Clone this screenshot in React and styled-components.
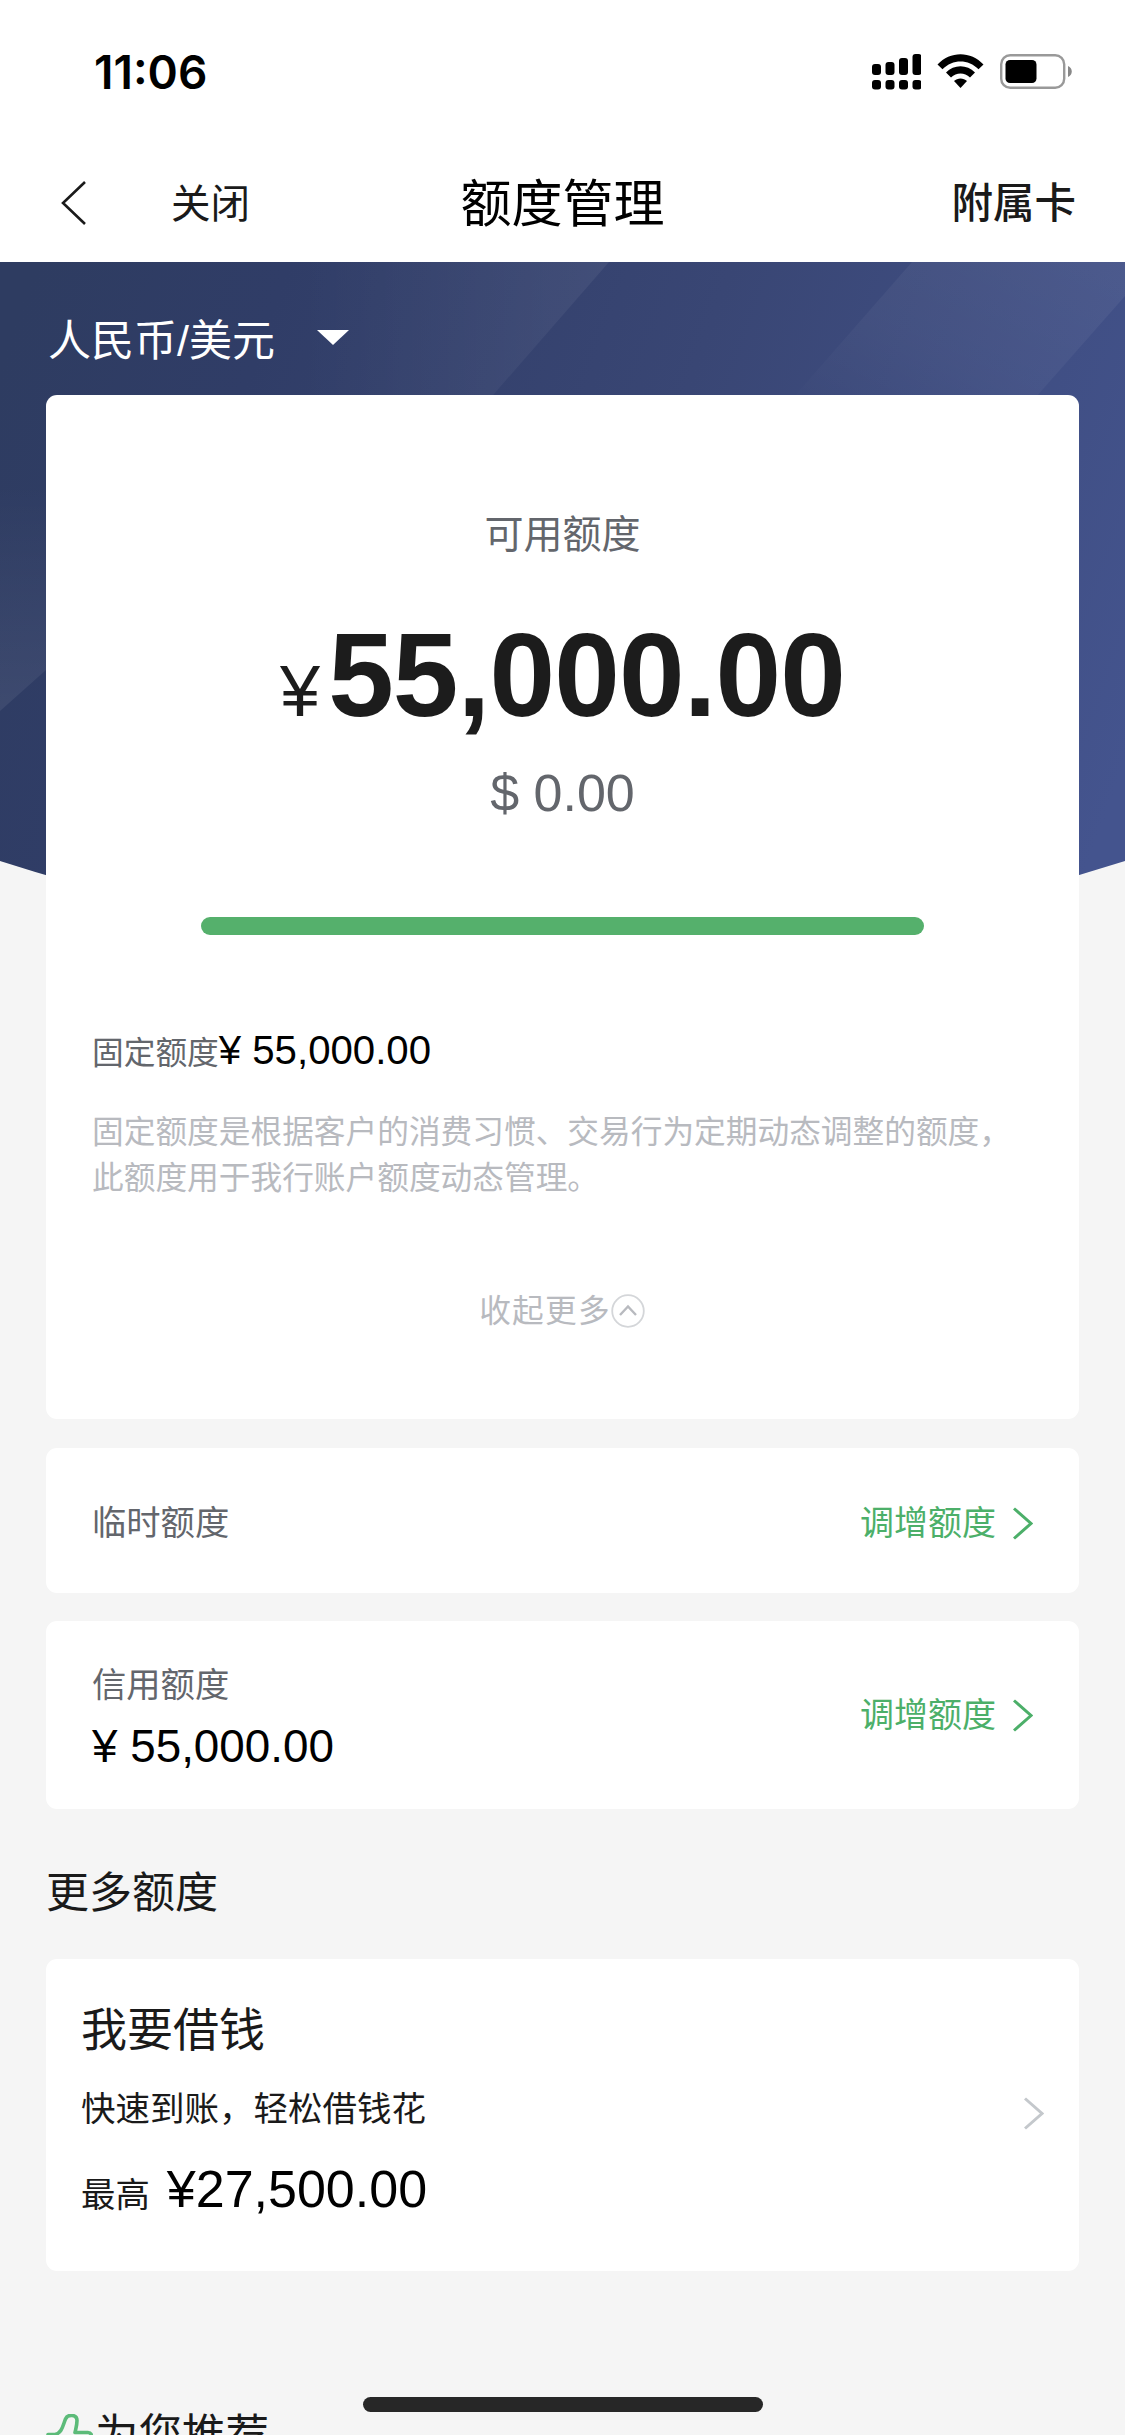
import React from "react";
import styled, { createGlobalStyle } from "styled-components";

const GlobalStyle = createGlobalStyle`
  * {
    box-sizing: border-box;
  }
  body {
    margin: 0;
    background: #f5f5f5;
    font-family: "Liberation Sans", "Noto Sans CJK SC", sans-serif;
    color: #1a1a1a;
  }
`;

const Page = styled.div`
  position: relative;
  width: 1125px;
  height: 2435px;
  overflow: hidden;
  background: #f5f5f5;
`;

const StatusBar = styled.div`
  display: flex;
  align-items: center;
  justify-content: space-between;
  height: 143px;
  padding: 0 53px 0 94px;
  background: white;
`;

const Time = styled.div`
  font-family: Inter, sans-serif;
  font-size: 46px;
  font-weight: 600;
  color: black;
`;

const StatusIcons = styled.div`
  display: flex;
  align-items: center;
  gap: 16px;
`;

const NavBar = styled.header`
  display: grid;
  grid-template-columns: 1fr auto 1fr;
  align-items: center;
  height: 119px;
  padding: 0 49px 5px;
  background: white;
`;

const NavLeft = styled.div`
  display: flex;
  align-items: center;
  gap: 84px;
  padding-left: 10px;
  font-size: 39.5px;

  svg {
    margin-top: 5px;
  }
`;

const Title = styled.h1`
  margin: 0;
  font-size: 51px;
  font-weight: 400;
  color: black;
`;

const NavRight = styled.div`
  justify-self: end;
  font-size: 41.5px;
  font-weight: 500;
`;

const BannerArt = styled.svg`
  position: absolute;
  top: 262px;
  left: 0;
  display: block;
`;

const Content = styled.main`
  position: relative;
  padding: 0 46px;
`;

const Currency = styled.div`
  display: flex;
  align-items: center;
  gap: 42px;
  height: 133px;
  padding: 17px 0 0 2px;
  font-size: 43px;
  color: white;
`;

const Card = styled.section`
  display: flex;
  align-items: center;
  justify-content: space-between;
  height: ${(props) => props.$height}px;
  margin-bottom: 28px;
  padding: 0 46px;
  border-radius: 11px;
  background: white;
`;

const LimitCard = styled(Card)`
  flex-direction: column;
  align-items: stretch;
  justify-content: flex-start;
  padding-top: 110px;
  margin-bottom: 29px;
`;

const Available = styled.div`
  text-align: center;
  font-size: 39px;
  line-height: 60px;
  color: #63666c;
`;

const Amount = styled.div`
  display: flex;
  align-items: baseline;
  justify-content: center;
  margin-top: 45px;
  height: 130px;
  line-height: 130px;
  font-size: 118px;
  font-weight: 700;
  letter-spacing: -0.9px;
  color: #1c1c1c;
`;

const Yen = styled.span`
  margin-right: 9px;
  font-size: 72px;
  font-weight: 400;
`;

const Dollar = styled.div`
  margin-top: 23px;
  text-align: center;
  font-size: 52px;
  line-height: 60px;
  color: #63666c;
`;

const Progress = styled.div`
  height: 18px;
  margin: 94px 109px 0;
  border-radius: 9px;
  background: #55b06c;
`;

const Fixed = styled.div`
  display: flex;
  align-items: baseline;
  height: 60px;
  margin-top: 86px;
  line-height: 60px;
  font-size: 31.7px;
  color: #63666c;
`;

const Price = styled.span`
  font-size: ${(props) => props.$size}px;
  color: black;
`;

const Note = styled.p`
  margin: 28px 0 0;
  font-size: 31.7px;
  line-height: 46px;
  white-space: nowrap;
  color: #b8babf;
`;

const Collapse = styled.div`
  display: flex;
  align-items: center;
  justify-content: center;
  margin-top: 87px;
  padding-right: 1px;
  font-size: 31.7px;
  line-height: 46px;
  letter-spacing: 1.2px;
  color: #b8babf;
`;

const Label = styled.div`
  font-size: 34.3px;
  line-height: 50px;
  color: #63666c;
`;

const Stack = styled.div`
  display: flex;
  flex-direction: column;
  gap: 11px;
  padding-top: 2px;
`;

const Raise = styled.div`
  display: flex;
  align-items: center;
  gap: 16px;
  font-size: 34px;
  line-height: 50px;
  color: #4caf69;
`;

// 没有金额的卡片，文字略微靠下
const TempCard = styled(Card)`
  padding-top: 5px;
`;

const SectionTitle = styled.h2`
  margin: 52px 0 34px;
  font-size: 43px;
  font-weight: 400;
  line-height: 64px;
`;

const LoanCard = styled(Card)`
  padding: 0 35px 3px;
  margin-bottom: 132px;
`;

const LoanTitle = styled.div`
  font-size: 46px;
  line-height: 60px;
`;

const LoanText = styled.div`
  margin-top: 24px;
  font-size: 34.5px;
  line-height: 50px;
`;

const LoanMax = styled.div`
  display: flex;
  align-items: baseline;
  gap: 17px;
  margin-top: 23px;
  font-size: 34.4px;
  line-height: 64px;
`;

const Recommend = styled.div`
  display: flex;
  align-items: flex-start;
  gap: 2px;
  font-size: 43.5px;
  line-height: 64px;

  svg {
    margin-top: 11px;
  }
`;

const HomeIndicator = styled.div`
  position: absolute;
  left: 363px;
  bottom: 23px;
  width: 400px;
  height: 15px;
  border-radius: 8px;
  background: #272727;
`;

const bars = [
  { x: 0, y: 10, height: 11 },
  { x: 13.5, y: 8, height: 13 },
  { x: 27, y: 4, height: 17 },
  { x: 40.5, y: 0, height: 21 },
];

const Signal = () => (
  <svg width="49" height="36" viewBox="0 0 49 36">
    {bars.map((bar) => (
      <g key={bar.x}>
        <rect x={bar.x} y={bar.y} width="9" height={bar.height} rx="3" />
        <rect x={bar.x} y="26" width="9" height="9.6" rx="3" />
      </g>
    ))}
  </svg>
);

const Wifi = () => (
  <svg width="47" height="35" viewBox="0 0 47 35">
    <path d="M0.5 10.5C13-3.3 34-3.3 46.5 10.5L41.5 15.3C31.5 4.8 15.5 4.8 5.5 15.3Z" />
    <path d="M9 18.5C17 10 30 10 38 18.5L33 23.5C27.5 18 19.5 18 14 23.5Z" />
    <path d="M17 27C20.5 23.5 26.5 23.5 30 27L23.5 34Z" />
  </svg>
);

const Battery = () => (
  <svg width="72" height="35" viewBox="0 0 72 35">
    <rect x="1.2" y="1.2" width="63" height="32.6" rx="9" fill="none" stroke="#999" strokeWidth="2.4" />
    <rect x="5.5" y="6" width="31" height="23" rx="4.5" />
    <path d="M68 12C73 14 73 21 68 23Z" fill="#888" />
  </svg>
);

const Arrow = ({ color }) => (
  <svg width="21" height="33" viewBox="0 0 21 33" fill="none">
    <path d="M2 1.5L19 16.5L2 31.5" stroke={color} strokeWidth="3" />
  </svg>
);

const Thumb = () => (
  <svg width="47" height="46" viewBox="0 0 47 46" fill="none" stroke="#5cbb79" strokeWidth="3.6">
    <path
      d="M2 20.5H9C16 19 17 11 19.5 5C21.5 0 31 0 31 6.5C31 11 30 14 29 18.5H42C45 18.5 46 21 45 24L40 42H2Z"
      strokeLinejoin="round"
    />
  </svg>
);

const Banner = () => (
  <BannerArt width="1125" height="640" viewBox="0 0 1125 640">
    <defs>
      <linearGradient id="base" gradientUnits="userSpaceOnUse" x1="0" y1="100" x2="1125" y2="500">
        <stop offset="0" stopColor="#2e3c61" />
        <stop offset="0.2" stopColor="#303d67" />
        <stop offset="0.55" stopColor="#394674" />
        <stop offset="1" stopColor="#44548e" />
      </linearGradient>
      <linearGradient id="beam" x1="0" y1="0" x2="1" y2="0">
        <stop offset="0.2" stopColor="#fff" stopOpacity="0" />
        <stop offset="1" stopColor="#fff" stopOpacity="0.06" />
      </linearGradient>
      <linearGradient id="beamRight" x1="0" y1="1" x2="1" y2="0">
        <stop offset="0.15" stopColor="#fff" stopOpacity="0" />
        <stop offset="0.5" stopColor="#fff" stopOpacity="0.035" />
        <stop offset="1" stopColor="#fff" stopOpacity="0.06" />
      </linearGradient>
      <linearGradient id="beamLeft" x1="0" y1="0" x2="0" y2="1">
        <stop offset="0" stopColor="#fff" stopOpacity="0" />
        <stop offset="1" stopColor="#fff" stopOpacity="0.07" />
      </linearGradient>
    </defs>
    <path d="M0 0H1125V599Q562 780 0 599Z" fill="url(#base)" />
    <path d="M300 0H609L487 140H220Z" fill="url(#beam)" />
    <path d="M912 0H1125V34L992 185H750Z" fill="url(#beamRight)" />
    <path d="M0 220H46V408L0 449Z" fill="url(#beamLeft)" />
  </BannerArt>
);

const App = () => {
  return (
    <Page>
      <GlobalStyle />
      <StatusBar>
        <Time>11:06</Time>
        <StatusIcons>
          <Signal />
          <Wifi />
          <Battery />
        </StatusIcons>
      </StatusBar>
      <NavBar>
        <NavLeft>
          <svg width="28" height="46" viewBox="0 0 28 46" fill="none">
            <path d="M26 2L4 23L26 44" stroke="#1a1a1a" strokeWidth="2.6" />
          </svg>
          关闭
        </NavLeft>
        <Title>额度管理</Title>
        <NavRight>附属卡</NavRight>
      </NavBar>
      <Banner />
      <Content>
        <Currency>
          人民币/美元
          <svg width="32" height="15" viewBox="0 0 32 15">
            <path d="M0 0H32L16 15Z" fill="white" />
          </svg>
        </Currency>
        <LimitCard $height={1024}>
          <Available>可用额度</Available>
          <Amount>
            <Yen>¥</Yen>55,000.00
          </Amount>
          <Dollar>$ 0.00</Dollar>
          <Progress />
          <Fixed>
            固定额度<Price $size={40.2}>¥ 55,000.00</Price>
          </Fixed>
          <Note>
            固定额度是根据客户的消费习惯、交易行为定期动态调整的额度，
            <br />
            此额度用于我行账户额度动态管理。
          </Note>
          <Collapse>
            收起更多
            <svg width="34" height="34" viewBox="0 0 34 34" fill="none">
              <circle cx="17" cy="17" r="15.8" stroke="#d4d6d9" strokeWidth="1.8" />
              <path d="M9 21L17 12.5L25 21" stroke="#b8babf" strokeWidth="2.4" />
            </svg>
          </Collapse>
        </LimitCard>
        <TempCard $height={145}>
          <Label>临时额度</Label>
          <Raise>
            调增额度
            <Arrow color="#4caf69" />
          </Raise>
        </TempCard>
        <Card $height={188}>
          <Stack>
            <Label>信用额度</Label>
            <Price $size={45.8}>¥ 55,000.00</Price>
          </Stack>
          <Raise>
            调增额度
            <Arrow color="#4caf69" />
          </Raise>
        </Card>
        <SectionTitle>更多额度</SectionTitle>
        <LoanCard $height={312}>
          <div>
            <LoanTitle>我要借钱</LoanTitle>
            <LoanText>快速到账，轻松借钱花</LoanText>
            <LoanMax>
              最高
              <Price $size={52}>¥27,500.00</Price>
            </LoanMax>
          </div>
          <Arrow color="#c4c8cc" />
        </LoanCard>
        <Recommend>
          <Thumb />
          为您推荐
        </Recommend>
      </Content>
      <HomeIndicator />
    </Page>
  );
};

export default App;
